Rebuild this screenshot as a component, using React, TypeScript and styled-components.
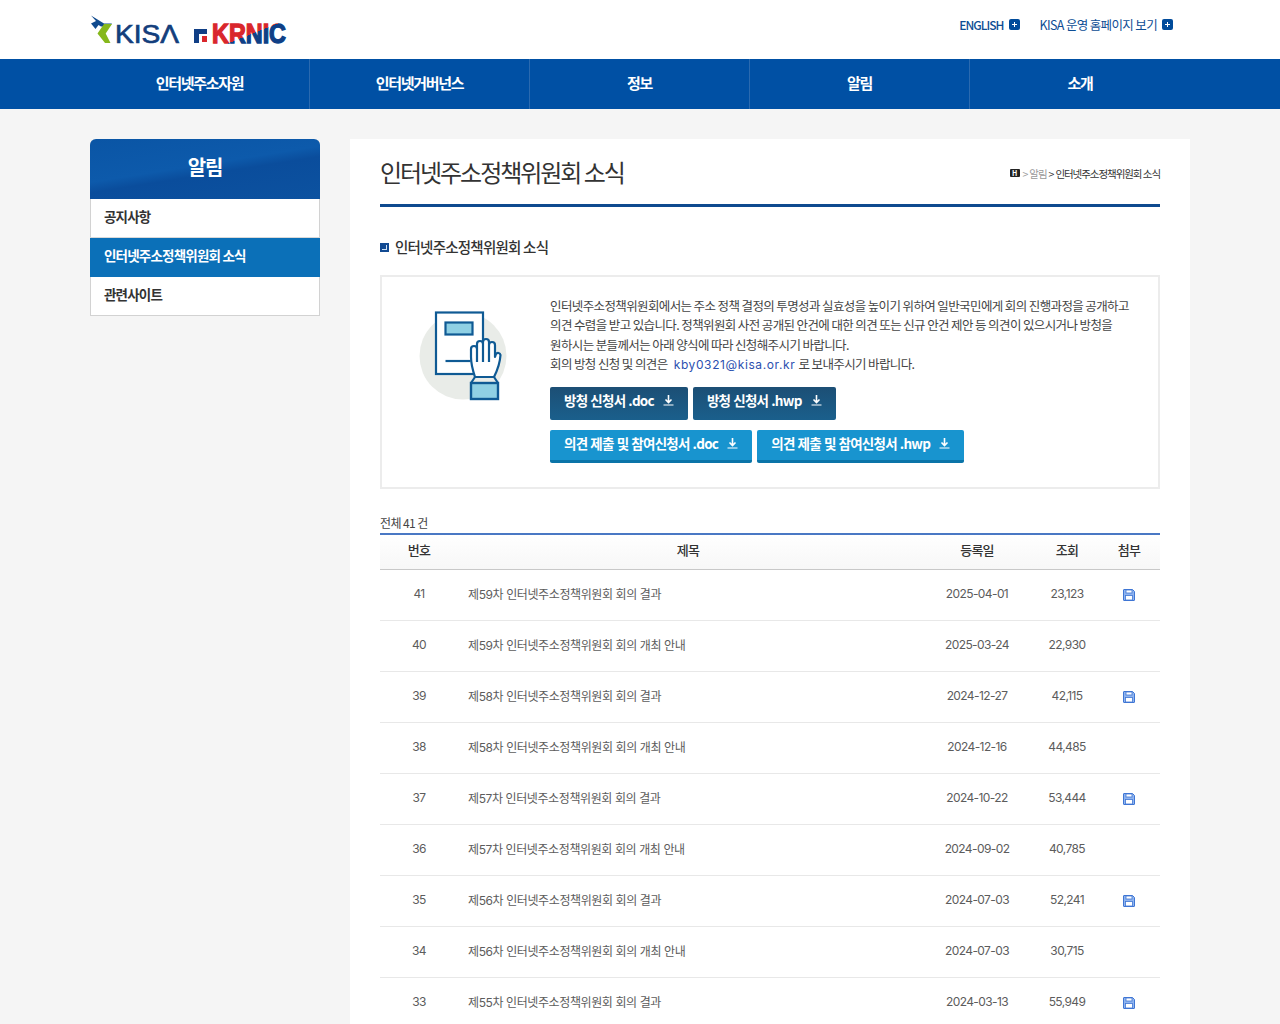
import React from "react";
import styled, { createGlobalStyle } from "styled-components";

const FONT = `"Noto Sans CJK KR", "Noto Sans", sans-serif`;
const NUM_FONT = `Inter, "Noto Sans CJK KR", sans-serif`;

const Global = createGlobalStyle`
  html, body { margin: 0; padding: 0; background: #f5f5f5; }
  #root { height: 100vh; overflow: hidden; }
  * { box-sizing: border-box; }
  body { font-family: ${FONT}; }
`;

const Page = styled.div`
  width: 1280px;
  font-family: ${FONT};
`;
const Top = styled.header`
  height: 59px;
  background: #fff;
`;
const TopInner = styled.div`
  width: 1100px;
  margin: 0 auto;
  height: 100%;
  display: flex;
  justify-content: space-between;
  align-items: flex-start;
`;
const Logos = styled.div`
  display: flex;
  align-items: flex-start;
  gap: 12px;
  padding-top: 14px;
`;
const TopLinks = styled.div`
  display: flex;
  gap: 20px;
  padding: 15px 17px 0 0;
`;
const TopLink = styled.a<{ $bold?: boolean }>`
  display: flex;
  align-items: center;
  gap: 5px;
  height: 18px;
  font-size: ${(p) => (p.$bold ? "12px" : "12.5px")};
  letter-spacing: ${(p) => (p.$bold ? "-0.95px" : "-0.65px")};
  color: #0d4d94;
  font-weight: ${(p) => (p.$bold ? 500 : 400)};
`;
const Plus = styled.span`
  width: 11px;
  height: 11px;
  border-radius: 2px;
  background: #004b9b;
  color: #fff;
  position: relative;
  &::before, &::after {
    content: "";
    position: absolute;
    background: #fff;
  }
  &::before { left: 3px; top: 5px; width: 5px; height: 1px; }
  &::after { left: 5px; top: 3px; width: 1px; height: 5px; }
`;
const Nav = styled.nav`
  height: 50px;
  background: #0050a4;
`;
const NavInner = styled.div`
  width: 1100px;
  margin: 0 auto;
  display: grid;
  grid-template-columns: repeat(5, 220px);
  height: 100%;
`;
const NavItem = styled.a`
  display: flex;
  align-items: center;
  justify-content: center;
  padding-bottom: 4px;
  color: #fff;
  font-size: 15px;
  font-weight: 700;
  letter-spacing: -1.3px;
  border-right: 1px solid #2a6ab0;
  &:last-child { border-right: 0; }
`;
const Body = styled.div`
  width: 1100px;
  margin: 30px auto 0;
  display: flex;
  gap: 30px;
  align-items: flex-start;
`;
const Side = styled.aside`
  width: 230px;
  flex: none;
  border: 1px solid #d2d2d2;
  border-top: 0;
  border-radius: 6px 6px 0 0;
  background: #fff;
`;
const SideTitle = styled.div`
  height: 60px;
  margin: 0 -1px;
  border-radius: 6px 6px 0 0;
  background: linear-gradient(171deg, #0a55a5 0%, #0d5aab 45%, #0a4d9c 56%, #0c52a0 100%);
  color: #fff;
  font-size: 20px;
  font-weight: 700;
  letter-spacing: -1.2px;
  display: flex;
  align-items: center;
  justify-content: center;
  padding: 0 0 5px 0;
`;
const SideItem = styled.a<{ $on?: boolean }>`
  display: flex;
  align-items: center;
  height: 39px;
  margin: 0 -1px;
  padding: 0 14px 4px;
  font-size: 13.5px;
  font-weight: 700;
  letter-spacing: -0.8px;
  color: ${(p) => (p.$on ? "#fff" : "#333")};
  background: ${(p) => (p.$on ? "#0b70b8" : "transparent")};
  border-bottom: 1px solid ${(p) => (p.$on ? "#0b70b8" : "#d9d9d9")};
  &:last-child { border-bottom: 0; margin: 0; padding-left: 13px; height: 38px; }
`;
const Main = styled.main`
  width: 840px;
  background: #fff;
  padding: 0 30px;
  min-height: 1000px;
`;
const Head = styled.div`
  height: 68px;
  border-bottom: 3px solid #0f4a8f;
  display: flex;
  align-items: center;
  justify-content: space-between;
`;
const H1 = styled.h1`
  margin: 0;
  font-size: 24px;
  font-weight: 400;
  letter-spacing: -2.05px;
  color: #333;
  line-height: 68px;
`;
const Crumb = styled.div`
  display: flex;
  align-items: center;
  gap: 2px;
  padding-top: 3px;
  font-size: 10.5px;
  letter-spacing: -1.05px;
  color: #333;
  span.g { color: #999; }
`;
const Home = styled.span`
  width: 10px;
  height: 8px;
  background: #222;
  border-radius: 1px;
  margin-right: 1px;
  color: #fff;
  font-size: 7px;
  font-weight: 700;
  line-height: 8px;
  text-align: center;
  letter-spacing: 0;
`;
const H2 = styled.h2`
  margin: 27px 0 17px;
  display: flex;
  align-items: center;
  gap: 6px;
  height: 24px;
  font-size: 14.5px;
  font-weight: 500;
  letter-spacing: -0.78px;
  color: #333;
`;
const Bullet = styled.span`
  width: 9px;
  height: 9px;
  background: #124a92;
  margin-top: 3px;
  position: relative;
  &::after {
    content: "";
    position: absolute;
    right: 2px;
    bottom: 2px;
    width: 4px;
    height: 4px;
    border-right: 1px solid #cfe2f5;
    border-bottom: 1px solid #cfe2f5;
  }
`;
const Info = styled.section`
  height: 214px;
  border: 2px solid #ececec;
  display: flex;
  padding: 19px 20px 0 168px;
  position: relative;
`;
const Illust = styled.div`
  position: absolute;
  left: 36px;
  top: 34px;
`;
const InfoBody = styled.div`
  width: 590px;
`;
const Para = styled.p`
  margin: 0;
  font-size: 12.5px;
  line-height: 19.4px;
  letter-spacing: -0.62px;
  color: #444;
`;
const Mail = styled.a`
  font-family: ${NUM_FONT};
  color: #2b50b0;
  font-size: 12px;
  letter-spacing: 0.6px;
  margin: 0 1px 0 4px;
`;
const BtnRow = styled.div<{ $first?: boolean }>`
  display: flex;
  gap: 5px;
  margin-top: ${(p) => (p.$first ? "12.4px" : "10px")};
`;
const Btn = styled.a<{ $light?: boolean }>`
  display: flex;
  align-items: center;
  height: 33px;
  padding: 0 14px ${(p) => (p.$light ? "4px" : "7px")};
  gap: 9px;
  border-radius: 2px;
  color: #fff;
  font-size: 13.5px;
  font-weight: 700;
  letter-spacing: -0.76px;
  word-spacing: 0.7px;
  background: ${(p) => (p.$light ? "#1894cf" : "linear-gradient(#1c4f75,#1a5f8c)")};
  border-bottom: ${(p) => (p.$light ? "3px solid #0a74a8" : "0")};
  svg { flex: none; }
`;
const Count = styled.div`
  margin-top: 25px;
  height: 19px;
  font-size: 12px;
  letter-spacing: -0.6px;
  line-height: 18px;
  color: #444;
`;
const Table = styled.table`
  width: 780px;
  border-collapse: collapse;
  table-layout: fixed;
  border-top: 2px solid #4a78c4;
`;
const Th = styled.th`
  height: 35px;
  padding: 0 0 5px;
  font-size: 13px;
  font-weight: 500;
  letter-spacing: -0.8px;
  color: #333;
  background: linear-gradient(#fff, #f7f7f7);
  border-bottom: 1px solid #c8c8c8;
`;
const Td = styled.td<{ $left?: boolean }>`
  height: 51px;
  padding: 0 0 2px ${(p) => (p.$left ? "10px" : "0")};
  font-family: ${NUM_FONT};
  font-size: 12px;
  letter-spacing: ${(p) => (p.$left ? "-0.4px" : "-0.6px")};
  color: #5c5c5c;
  text-align: ${(p) => (p.$left ? "left" : "center")};
  border-bottom: 1px solid #e8e8e8;
`;
const DiskSvg = styled.svg`
  display: inline-block;
  vertical-align: middle;
`;

const Disk = () => (
  <DiskSvg width="12" height="12" viewBox="0 0 12 12">
    <path d="M1 .5h8.500L11.500 2.500V11a.5.5 0 0 1-.5.5H1A.5.5 0 0 1 .5 11V1A.5.5 0 0 1 1 .5Z" fill="#8fb4ef" stroke="#3f76d4" />
    <rect x="3" y="1" width="6" height="3" fill="#fff" stroke="#3f76d4" strokeWidth=".8" />
    <rect x="2.500" y="6.500" width="7" height="4.500" fill="#fff" stroke="#3f76d4" strokeWidth=".8" />
  </DiskSvg>
);

const Down = () => (
  <svg width="11" height="12" viewBox="0 0 11 12">
    <path d="M5.500 1v7M2.500 5.500l3 3 3-3" fill="none" stroke="#fff" strokeWidth="1.600" />
    <path d="M.5 11h10" stroke="#fff" strokeWidth="1" />
  </svg>
);

const KisaLogo = () => (
  <svg width="92" height="38" viewBox="0 0 92 38">
    <path d="M1 1.500L14 9.500H22L19.500 12.500H11L8.500 11L5.500 15L1 9.500L6 7Z" fill="#104a8e" />
    <path d="M14 10H22L15.700 19.500L20.500 29H15L7.500 19.500Z" fill="#86b81c" />
    <text x="25" y="29" fontFamily="'Liberation Sans', sans-serif" fontSize="26.500" fill="#133e7c" stroke="#133e7c" strokeWidth=".7" textLength="64" lengthAdjust="spacingAndGlyphs">KISΛ</text>
  </svg>
);

const KrnicLogo = () => (
  <svg width="96" height="38" viewBox="0 0 96 38">
    <defs>
      <linearGradient id="krg" gradientUnits="userSpaceOnUse" x1="42" y1="-15.500" x2="47" y2="-0.500">
        <stop offset="50%" stopColor="#d9262c" />
        <stop offset="50%" stopColor="#103f86" />
      </linearGradient>
    </defs>
    <path d="M0 15h13v5H5v9H0Z" fill="#103f86" />
    <rect x="8" y="22" width="5" height="6" fill="#d9262c" />
    <text transform="translate(18 29) scale(.835 1)" fontFamily="'Liberation Sans', sans-serif" fontWeight="700" fontSize="28" fill="url(#krg)" stroke="url(#krg)" strokeWidth="1.400">KRNIC</text>
  </svg>
);

const Pledge = () => (
  <svg width="92" height="92" viewBox="0 0 92 92">
    <circle cx="45" cy="45" r="43.500" fill="#e9ece8" />
    <rect x="18" y="1.500" width="47" height="61.500" fill="#fff" stroke="#0f5a94" strokeWidth="2.200" />
    <rect x="27.500" y="11.500" width="27" height="12" fill="#8fd0e4" stroke="#0f5a94" strokeWidth="2.200" />
    <path d="M27.500 50h25" stroke="#0f5a94" strokeWidth="2.200" />
    <path d="M57 66C55 60 53 54 53 46V38a3 3 0 0 1 6 0V33a3 3 0 0 1 6 0V31a3 3 0 0 1 6 0V34a3 3 0 0 1 6 0V46l1-3a2.500 2.500 0 0 1 4.500 1C82 52 79 60 76 66Z" fill="#fff" stroke="#0f5a94" strokeWidth="2.200" strokeLinejoin="round" />
    <path d="M59 38v13M65 33v18M71 34v17" stroke="#0f5a94" strokeWidth="2.200" />
    <path d="M57 66l-4 6M76 66l4 6" stroke="#0f5a94" strokeWidth="2.200" />
    <rect x="53" y="72" width="27" height="16" fill="#8fd0e4" stroke="#0f5a94" strokeWidth="2.400" />
  </svg>
);

const rows: [number, string, string, string, boolean][] = [
  [41, "제59차 인터넷주소정책위원회 회의 결과", "2025-04-01", "23,123", true],
  [40, "제59차 인터넷주소정책위원회 회의 개최 안내", "2025-03-24", "22,930", false],
  [39, "제58차 인터넷주소정책위원회 회의 결과", "2024-12-27", "42,115", true],
  [38, "제58차 인터넷주소정책위원회 회의 개최 안내", "2024-12-16", "44,485", false],
  [37, "제57차 인터넷주소정책위원회 회의 결과", "2024-10-22", "53,444", true],
  [36, "제57차 인터넷주소정책위원회 회의 개최 안내", "2024-09-02", "40,785", false],
  [35, "제56차 인터넷주소정책위원회 회의 결과", "2024-07-03", "52,241", true],
  [34, "제56차 인터넷주소정책위원회 회의 개최 안내", "2024-07-03", "30,715", false],
  [33, "제55차 인터넷주소정책위원회 회의 결과", "2024-03-13", "55,949", true],
];

export default function App() {
  return (
    <Page>
      <Global />
      <Top>
        <TopInner>
          <Logos>
            <KisaLogo />
            <KrnicLogo />
          </Logos>
          <TopLinks>
            <TopLink $bold>ENGLISH <Plus /></TopLink>
            <TopLink>KISA 운영 홈페이지 보기 <Plus /></TopLink>
          </TopLinks>
        </TopInner>
      </Top>
      <Nav>
        <NavInner>
          {["인터넷주소자원", "인터넷거버넌스", "정보", "알림", "소개"].map((t) => (
            <NavItem key={t}>{t}</NavItem>
          ))}
        </NavInner>
      </Nav>
      <Body>
        <Side>
          <SideTitle>알림</SideTitle>
          <SideItem>공지사항</SideItem>
          <SideItem $on>인터넷주소정책위원회 소식</SideItem>
          <SideItem>관련사이트</SideItem>
        </Side>
        <Main>
          <Head>
            <H1>인터넷주소정책위원회 소식</H1>
            <Crumb>
              <Home>H</Home>
              <span className="g">&gt;</span>
              <span className="g">알림</span>
              <span>&gt;</span>
              <span>인터넷주소정책위원회 소식</span>
            </Crumb>
          </Head>
          <H2><Bullet />인터넷주소정책위원회 소식</H2>
          <Info>
            <Illust><Pledge /></Illust>
            <InfoBody>
              <Para>
                인터넷주소정책위원회에서는 주소 정책 결정의 투명성과 실효성을 높이기 위하여 일반국민에게 회의 진행과정을 공개하고<br />
                의견 수렴을 받고 있습니다. 정책위원회 사전 공개된 안건에 대한 의견 또는 신규 안건 제안 등 의견이 있으시거나 방청을<br />
                원하시는 분들께서는 아래 양식에 따라 신청해주시기 바랍니다.<br />
                회의 방청 신청 및 의견은 <Mail>kby0321@kisa.or.kr</Mail> 로 보내주시기 바랍니다.
              </Para>
              <BtnRow $first>
                <Btn>방청 신청서 .doc <Down /></Btn>
                <Btn>방청 신청서 .hwp <Down /></Btn>
              </BtnRow>
              <BtnRow>
                <Btn $light>의견 제출 및 참여신청서 .doc <Down /></Btn>
                <Btn $light>의견 제출 및 참여신청서 .hwp <Down /></Btn>
              </BtnRow>
            </InfoBody>
          </Info>
          <Count>전체 41 건</Count>
          <Table>
            <colgroup>
              <col width="78" />
              <col width="460" />
              <col width="118" />
              <col width="62" />
              <col width="62" />
            </colgroup>
            <thead>
              <tr>
                <Th>번호</Th>
                <Th>제목</Th>
                <Th>등록일</Th>
                <Th>조회</Th>
                <Th>첨부</Th>
              </tr>
            </thead>
            <tbody>
              {rows.map(([n, t, d, v, f]) => (
                <tr key={n}>
                  <Td>{n}</Td>
                  <Td $left>{t}</Td>
                  <Td>{d}</Td>
                  <Td>{v}</Td>
                  <Td>{f && <Disk />}</Td>
                </tr>
              ))}
            </tbody>
          </Table>
        </Main>
      </Body>
    </Page>
  );
}
